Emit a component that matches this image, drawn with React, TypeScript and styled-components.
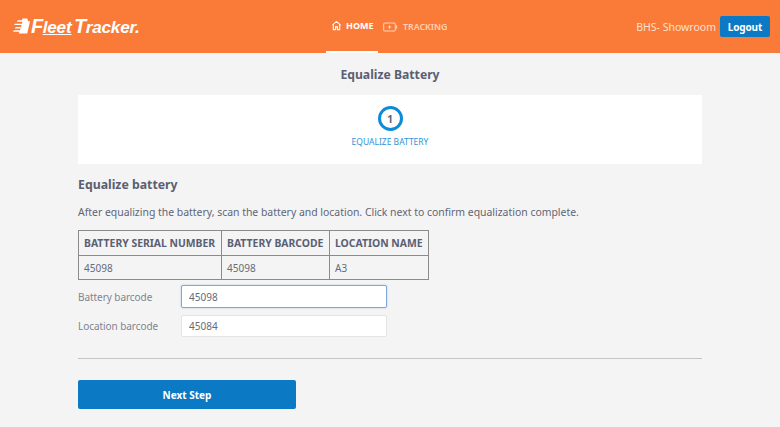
import React from "react";
import styled, { createGlobalStyle } from "styled-components";

const Global = createGlobalStyle`
  html, body { margin: 0; padding: 0; background: #f4f4f5; }
  body { font-family: "Noto Sans", "Open Sans", sans-serif; color: #5a6072; }
  * { box-sizing: border-box; }
`;
const Page = styled.div`
  width: 780px; height: 427px; overflow: hidden; background: #f4f4f5;
`;
const Header = styled.header`
  height: 53px; background: #fa7a38; display: grid;
  grid-template-columns: 326px 1fr auto; align-items: stretch;
  padding-right: 10px;
`;
const Brand = styled.div`
  display: flex; align-items: center; padding: 0 0 0 12px; color: #fff;
  margin-top: -1px;
`;
const BrandMark = styled.svg`
  width: 19px; height: 18px; flex: none;
`;
const BrandName = styled.span`
  font-family: "Liberation Sans", sans-serif; font-style: italic; font-weight: 700;
  font-size: 17.2px; letter-spacing: -0.2px; word-spacing: -2px; line-height: 18px; white-space: nowrap;
`;
const BrandCap = styled.span`
  font-size: 20px; letter-spacing: -0.6px;
`;
const BrandUnder = styled.span`
  text-decoration: underline; text-decoration-thickness: 1px; text-underline-offset: 1px;
`;
const Nav = styled.nav`
  display: flex; align-items: stretch;
`;
const NavItem = styled.a<{ $active?: boolean }>`
  display: flex; align-items: center; gap: 4px; height: 53px;
  padding: 0 0 0 5px;
  width: ${p => (p.$active ? "52px" : "auto")};
  font-size: 9px; font-weight: 700; white-space: nowrap;
  color: ${p => (p.$active ? "#fff" : "#fdd3b7")};
  border-bottom: 2px solid ${p => (p.$active ? "#fff" : "transparent")};
  svg { flex: none; }
`;
const NavTracking = styled(NavItem)`
  margin-left: 0; gap: 5px; font-weight: 600; font-size: 8.8px; padding-top: 3px;
`;
const Account = styled.div`
  display: flex; align-items: center; gap: 4px; padding-bottom: 0;
`;
const Store = styled.span`
  font-size: 10.5px; color: #fde0cc; white-space: nowrap;
`;
const LogoutButton = styled.button`
  width: 50px; height: 21px; border: 0; border-radius: 2px; padding: 0;
  background: #0b79c4; color: #fff; font: 700 10px "Noto Sans", sans-serif; letter-spacing: -0.15px;
`;
const Main = styled.main`
  width: 624px; margin: 0 0 0 78px;
`;
const Title = styled.h1`
  margin: 0; height: 42px; font-size: 12.2px; line-height: 43px; font-weight: 700;
  text-align: center; color: #5a6072;
`;
const StepCard = styled.section`
  height: 69px; background: #fff; display: flex; flex-direction: column;
  align-items: center; padding-top: 11px;
`;
const StepCircle = styled.div`
  width: 25px; height: 25px; border-radius: 50%; border: 3px solid #0d8ad8;
  display: flex; align-items: center; justify-content: center;
  font-size: 10px; font-weight: 700; color: #5a6072;
`;
const StepLabel = styled.div`
  margin-top: 5px; font-size: 8.5px; line-height: 12px; color: #2f93d4; white-space: nowrap;
`;
const Heading = styled.h2`
  margin: 12px 0 0; font-size: 12.3px; line-height: 17px; font-weight: 700; color: #5a6072;
`;
const Lead = styled.p`
  margin: 12px 0 0; font-size: 10.43px; line-height: 15px; color: #5f6574; white-space: nowrap;
`;
const Table = styled.table`
  margin-top: 10px; border-collapse: collapse; font-size: 10px;
  border: 1px solid #8b8b8b;
`;
const HeadCell = styled.th<{ $w: number }>`
  width: ${p => p.$w}px; height: 25px; padding: 0 5px; text-align: left;
  border: 1px solid #8b8b8b; font-weight: 700; font-size: 10.4px; white-space: nowrap; color: #5a6072;
`;
const BodyCell = styled.td`
  height: 24px; padding: 0 5px; border: 1px solid #8b8b8b; color: #666b78;
`;
const Field = styled.div`
  display: grid; grid-template-columns: 103px 206px; align-items: center;
  height: 22px; margin-top: 7px;
`;
const FirstField = styled(Field)`
  margin-top: 5px; height: 23px;
`;
const FieldLabel = styled.label`
  font-size: 10px; letter-spacing: -0.06px; color: #80858f;
`;
const Input = styled.input<{ $focus?: boolean }>`
  width: 206px; height: ${p => (p.$focus ? "23px" : "22px")}; padding: 0 7px; border-radius: 2px; outline: 0;
  background: #fff; font: 10px "Noto Sans", sans-serif; color: #666b78;
  border: 1px solid ${p => (p.$focus ? "#7fa6d6" : "#e4e4e4")};
  box-shadow: ${p => (p.$focus ? "0 0 2px #a9c6e8" : "none")};
`;
const Divider = styled.hr`
  margin: 21px 0 0; border: 0; border-top: 1px solid #c4c4c4; height: 0;
`;
const NextButton = styled.button`
  display: block; margin-top: 21px; width: 218px; height: 29px; border: 0; border-radius: 2px;
  background: #0b79c4; color: #fff; font: 700 10px "Noto Sans", sans-serif;
`;

export default function App() {
  return (
    <Page>
      <Global />
      <Header>
        <Brand>
          <BrandMark viewBox="0 0 20 18" fill="#fff">
            <path d="M11 1h5l1 3h2l-3 13H7l1-2H1l1-1.500h6.500l.5-2H3l1-1.500h5.500l.5-2H2l1-1.500h7.500l.5-2H5l1-1.500h4.500z" />
          </BrandMark>
          <BrandName>
            <BrandCap>F</BrandCap>
            <BrandUnder>leet</BrandUnder> <BrandCap>T</BrandCap>racker.
          </BrandName>
        </Brand>
        <Nav>
          <NavItem $active>
            <svg width="11" height="11" viewBox="0 0 24 24" fill="none" stroke="#fff" strokeWidth="2.4">
              <path d="M3 11 12 3l9 8M5 10v11h5v-6h4v6h5V10" />
            </svg>
            HOME
          </NavItem>
          <NavTracking>
            <svg width="15" height="10" viewBox="0 0 22 14" fill="none" stroke="#fdd3b7" strokeWidth="1.5">
              <rect x="1" y="1" width="17" height="12" rx="2" />
              <path d="M20 4.500v5M7 7h5M9.500 4.500v5" />
            </svg>
            TRACKING
          </NavTracking>
        </Nav>
        <Account>
          <Store>BHS- Showroom</Store>
          <LogoutButton>Logout</LogoutButton>
        </Account>
      </Header>
      <Main>
        <Title>Equalize Battery</Title>
        <StepCard>
          <StepCircle>1</StepCircle>
          <StepLabel>EQUALIZE BATTERY</StepLabel>
        </StepCard>
        <Heading>Equalize battery</Heading>
        <Lead>After equalizing the battery, scan the battery and location. Click next to confirm equalization complete.</Lead>
        <Table>
          <thead>
            <tr>
              <HeadCell $w={143}>BATTERY SERIAL NUMBER</HeadCell>
              <HeadCell $w={108}>BATTERY BARCODE</HeadCell>
              <HeadCell $w={99}>LOCATION NAME</HeadCell>
            </tr>
          </thead>
          <tbody>
            <tr>
              <BodyCell>45098</BodyCell>
              <BodyCell>45098</BodyCell>
              <BodyCell>A3</BodyCell>
            </tr>
          </tbody>
        </Table>
        <FirstField>
          <FieldLabel>Battery barcode</FieldLabel>
          <Input $focus defaultValue="45098" />
        </FirstField>
        <Field>
          <FieldLabel>Location barcode</FieldLabel>
          <Input defaultValue="45084" />
        </Field>
        <Divider />
        <NextButton>Next Step</NextButton>
      </Main>
    </Page>
  );
}
